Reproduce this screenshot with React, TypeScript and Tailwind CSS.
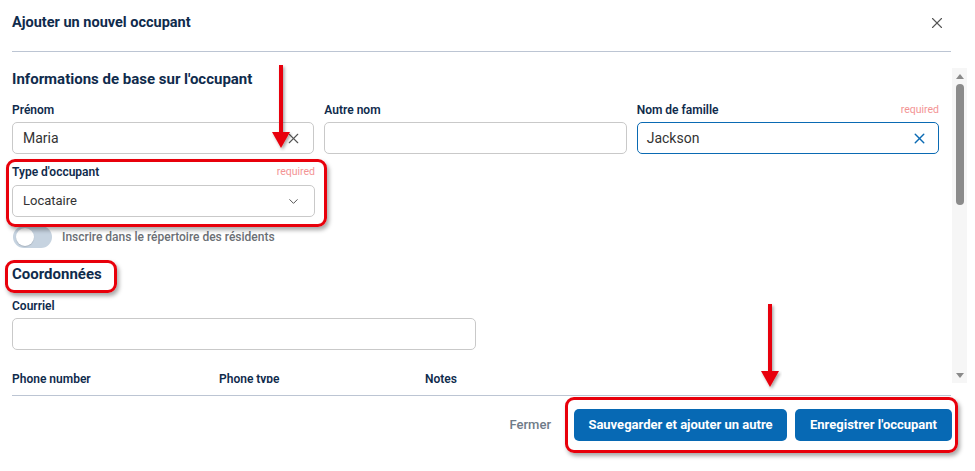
import { X, ChevronDown } from 'lucide-react';

const Label = ({ text, required }: { text: string; required?: boolean }) => (
    <div className="flex items-center justify-between h-4 mb-1">
        <span className="text-[12px] font-semibold text-[#0f2b4c]">{text}</span>
        {required && <span className="text-[10.5px] text-[#f39494]">required</span>}
    </div>
);

const Field = ({
    label,
    value,
    required,
    clear,
    focused,
}: {
    label: string;
    value?: string;
    required?: boolean;
    clear?: boolean;
    focused?: boolean;
}) => (
    <div className="flex-1">
        <Label text={label} required={required} />
        <div
            className={
                focused
                    ? 'h-8 rounded-[5px] border-[1.5px] border-[#0a6ab3] flex items-center pl-[9px] pr-[10px]'
                    : 'h-8 rounded-[5px] border border-[#c9c9c9] flex items-center pl-[10px] pr-[11px]'
            }
        >
            <span className="flex-1 text-[14px] text-[#333]">{value}</span>
            {clear && (
                <X size={17} strokeWidth={focused ? 2 : 1.6} className={focused ? 'text-[#0a6ab3]' : 'text-[#555]'} />
            )}
        </div>
    </div>
);

// red annotation arrow pointing down
const Arrow = ({ className }: { className: string }) => (
    <svg className={`absolute ${className}`} width="24" height="88" viewBox="0 0 24 88">
        <defs>
            <filter id="ash" x="-50%" y="-10%" width="200%" height="130%">
                <feDropShadow dx="1.5" dy="2" stdDeviation="1.5" floodColor="#000" floodOpacity="0.35" />
            </filter>
        </defs>
        <g filter="url(#ash)">
            <rect x="10" y="1" width="4" height="70" fill="#e8000b" />
            <path d="M3 68 L21 68 L12 84 Z" fill="#e8000b" />
        </g>
    </svg>
);

const Box = ({ className }: { className: string }) => (
    <div className={`absolute border-[3px] border-[#e8000b] rounded-[9px] shadow-[2px_3px_4px_rgba(0,0,0,0.35)] ${className}`} />
);

export default function App() {
    return (
        <div className="relative w-[975px] h-[471px] bg-white overflow-hidden font-['Roboto',sans-serif]">
            {/* Header */}
            <div className="h-[52px] mx-3 mr-6 flex items-center justify-between border-b-[1.5px] border-[#bcc5d3]">
                <h1 className="text-[14.5px] font-bold text-[#0f2b4c] -mt-[6px]">Ajouter un nouvel occupant</h1>
                <X size={18} strokeWidth={1.5} className="text-[#555] mr-[5px] -mt-[6px]" />
            </div>

            {/* Body */}
            <div className="h-[343px] pb-[12px] flex">
                <div className="flex-1 overflow-hidden pl-3 pr-[13px]">
                    <h2 className="mt-[17px] text-[15px] leading-5 font-bold text-[#0f2b4c]">Informations de base sur l'occupant</h2>
                    <div className="mt-[13px] flex gap-[10px]">
                        <Field label="Prénom" value="Maria" clear />
                        <Field label="Autre nom" />
                        <Field label="Nom de famille" value="Jackson" required clear focused />
                    </div>
                    <div className="mt-[10px] w-[303px]">
                        <Label text="Type d'occupant" required />
                        <div className="h-8 rounded-[5px] border border-[#c9c9c9] flex items-center pl-[10px] pr-[13px] mt-[5px]">
                            <span className="flex-1 text-[13px] text-[#333]">Locataire</span>
                            <ChevronDown size={15} strokeWidth={1.6} className="text-[#555]" />
                        </div>
                    </div>
                    <div className="mt-[9px] flex items-center gap-[10px]">
                        <div className="w-[39px] h-[22px] rounded-full bg-[#c6d3e0] flex items-center px-[3px] ml-px">
                            <div className="w-[18px] h-[18px] rounded-full bg-white shadow-[0_1px_1px_rgba(0,0,0,0.15)]" />
                        </div>
                        <span className="text-[12px] font-medium text-[#6b6f75]">Inscrire dans le répertoire des résidents</span>
                    </div>
                    <h2 className="mt-4 text-[15px] leading-5 font-bold text-[#0f2b4c]">Coordonnées</h2>
                    <div className="mt-[14px] w-[464px]">
                        <Label text="Courriel" />
                        <div className="h-8 rounded-[5px] border border-[#c9c9c9]" />
                    </div>
                    <div className="mt-[21px] flex text-[12px] font-semibold text-[#0f2b4c] leading-4">
                        <span className="w-[207px]">Phone number</span>
                        <span className="w-[206px]">Phone type</span>
                        <span>Notes</span>
                    </div>
                </div>
                {/* Scrollbar */}
                <div className="w-[15px] mr-2 mt-4 bg-[#f6f6f6] flex flex-col items-center">
                    <div className="mt-[6px] w-0 h-0 border-l-[4px] border-r-[4px] border-b-[5px] border-l-transparent border-r-transparent border-b-[#8a8a8a]" />
                    <div className="mt-[5px] w-[8px] h-[121px] rounded-full bg-[#8b8b8b]" />
                    <div className="flex-1" />
                    <div className="mb-[5px] w-0 h-0 border-l-[4px] border-r-[4px] border-t-[5px] border-l-transparent border-r-transparent border-t-[#8a8a8a]" />
                </div>
            </div>

            {/* Footer */}
            <div className="mx-3 mr-6 border-t-[1.5px] border-[#bcc5d3]" />
            <div className="mt-[13px] flex justify-end items-center gap-2 pr-[23px]">
                <span className="text-[13px] font-medium text-[#6f7b88] mr-[15px]">Fermer</span>
                <button className="h-8 w-[213px] rounded-[5px] bg-[#0769b4] text-white text-[13px] font-bold">
                    Sauvegarder et ajouter un autre
                </button>
                <button className="h-8 w-[157px] rounded-[5px] bg-[#0769b4] text-white text-[13px] font-bold">
                    Enregistrer l'occupant
                </button>
            </div>

            {/* Red annotations */}
            <Arrow className="left-[269px] top-[64px]" />
            <Arrow className="left-[758px] top-[303px]" />
            <Box className="left-[6px] top-[159px] w-[321px] h-[68px]" />
            <Box className="left-[5px] top-[260px] w-[112px] h-[33px]" />
            <Box className="left-[565px] top-[397px] w-[393px] h-[56px]" />
        </div>
    );
}
